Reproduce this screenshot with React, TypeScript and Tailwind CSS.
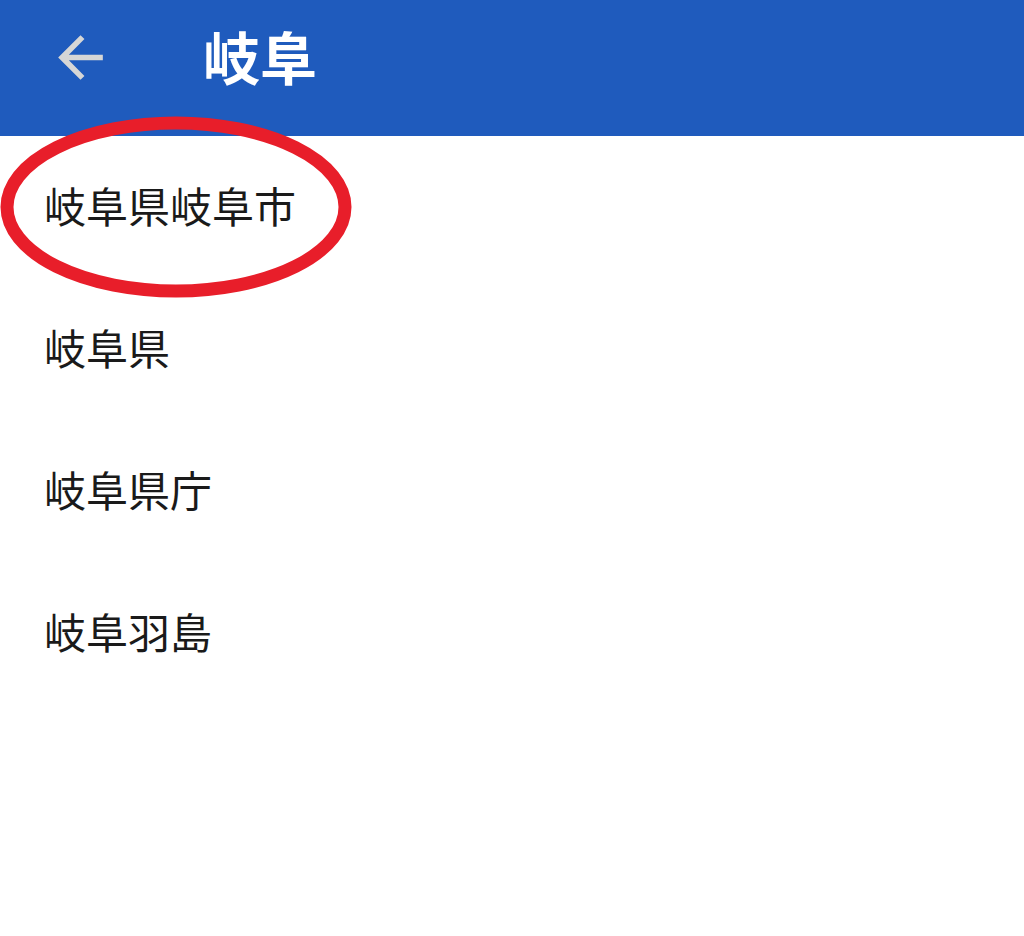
import React from "react";

const items = ["岐阜県岐阜市", "岐阜県", "岐阜県庁", "岐阜羽島"];

export default function App() {
  return (
    <div
      className="relative w-[1024px] h-[936px] bg-white overflow-hidden"
      style={{ fontFamily: '"Noto Sans CJK JP", "Noto Sans", sans-serif' }}
    >
      <header className="h-[136px] bg-[#1f5bbd] flex items-center">
        <div className="w-[67px] h-[67px] ml-[47px] mt-[-22px] flex items-center justify-center">
          <svg width="67" height="67" viewBox="0 0 24 24">
            <path
              d="M20 11H7.83l5.59-5.59L12 4l-8 8 8 8 1.41-1.41L7.83 13H20v-2z"
              fill="#d6d6d6"
            />
          </svg>
        </div>
        <h1 className="ml-[89px] mt-[-26px] text-white text-[57px] font-bold leading-none">
          岐阜
        </h1>
      </header>
      <ul className="mt-[-2px]">
        {items.map((t) => (
          <li
            key={t}
            className="h-[142px] flex items-center pl-[44px] text-[42px] leading-none text-[#1a1a1a]"
          >
            {t}
          </li>
        ))}
      </ul>
      <svg
        className="absolute left-0 top-[116px] pointer-events-none"
        width="354"
        height="184"
        viewBox="0 0 354 184"
      >
        <ellipse
          cx="176"
          cy="91"
          rx="169"
          ry="84"
          fill="none"
          stroke="#e81e2a"
          strokeWidth="13"
        />
      </svg>
    </div>
  );
}
